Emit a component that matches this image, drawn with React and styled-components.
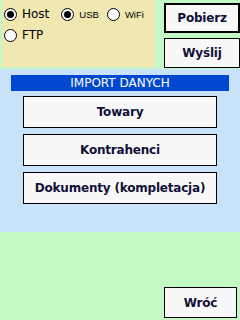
import styled, { createGlobalStyle } from "styled-components";

const Global = createGlobalStyle`
  html, body { margin: 0; padding: 0; }
  body { background: #c4f8c4; font-family: "DejaVu Sans", Verdana, sans-serif; }
`;

const Screen = styled.div`
  width: 240px;
  height: 320px;
  display: flex;
  flex-direction: column;
  background: #c4f8c4;
  overflow: hidden;
`;

const Top = styled.div`
  height: 69px;
  display: flex;
  flex-direction: row;
  justify-content: space-between;
`;

const Options = styled.div`
  width: 153px;
  height: 67px;
  margin-left: 2px;
  background: #f0e8b0;
  box-sizing: border-box;
  padding: 8px 0 0 2px;
  display: flex;
  flex-direction: column;
  gap: 8px;
`;

const RadioRow = styled.div`
  display: flex;
  align-items: center;
  gap: 4px;
`;

const Radio = styled.label`
  display: flex;
  align-items: center;
  gap: 5px;
  font-size: ${p => (p.$small ? "9.5px" : "12px")};
  color: #000;
  font-family: ${p => (p.$small ? '"Liberation Sans", Arial, sans-serif' : '"DejaVu Sans", Verdana, sans-serif')};
  line-height: 13px;
  margin-right: ${p => p.$gap || 0}px;
`;

const Circle = styled.span`
  width: 13px;
  height: 13px;
  box-sizing: border-box;
  border-radius: 50%;
  border: 1px solid #000;
  background: #fff;
  display: flex;
  align-items: center;
  justify-content: center;
  &::after {
    content: "";
    width: 7px;
    height: 7px;
    border-radius: 50%;
    background: #000;
    display: ${p => (p.$on ? "block" : "none")};
  }
`;

const SideButtons = styled.div`
  width: 76px;
  display: flex;
  flex-direction: column;
  padding-top: 3px;
  gap: 5px;
`;

const Button = styled.div`
  box-sizing: border-box;
  height: ${p => p.$h || 30}px;
  width: ${p => (p.$w ? p.$w + "px" : "100%")};
  background: #f8f8f8;
  border: ${p => (p.$default ? "2px" : "1px")} solid #000;
  display: flex;
  align-items: center;
  justify-content: center;
  font-family: "DejaVu Sans", Verdana, sans-serif;
  font-weight: bold;
  font-size: 12px;
  color: #101038;
  letter-spacing: -0.2px;
`;

const Panel = styled.div`
  height: 163px;
  background: #c8e2fa;
  box-sizing: border-box;
  padding: 6px 11px 0 11px;
  display: flex;
  flex-direction: column;
  align-items: center;
`;

const TitleBar = styled.div`
  width: 218px;
  height: 16px;
  background: #0048d0;
  color: #fff;
  font-family: "DejaVu Sans", Verdana, sans-serif;
  font-size: 12px;
  display: flex;
  align-items: center;
  justify-content: center;
  margin-bottom: 5px;
`;

const MenuList = styled.div`
  display: flex;
  flex-direction: column;
  gap: 6px;
`;

const Bottom = styled.div`
  flex: 1;
  display: flex;
  justify-content: flex-end;
  align-items: flex-end;
  padding: 0 3px 2px 0;
`;

export default function App() {
  return (
    <Screen>
      <Global />
      <Top>
        <Options>
          <RadioRow>
            <Radio $gap={8}><Circle $on />Host</Radio>
            <Radio $small $gap={4}><Circle $on />USB</Radio>
            <Radio $small><Circle />WiFi</Radio>
          </RadioRow>
          <RadioRow>
            <Radio><Circle />FTP</Radio>
          </RadioRow>
        </Options>
        <SideButtons>
          <Button $default $h={30}>Pobierz</Button>
          <Button $h={30}>Wyślij</Button>
        </SideButtons>
      </Top>
      <Panel>
        <TitleBar>IMPORT DANYCH</TitleBar>
        <MenuList>
          <Button $w={194} $h={32}>Towary</Button>
          <Button $w={194} $h={32}>Kontrahenci</Button>
          <Button $w={194} $h={32}>Dokumenty (kompletacja)</Button>
        </MenuList>
      </Panel>
      <Bottom>
        <Button $w={73} $h={31}>Wróć</Button>
      </Bottom>
    </Screen>
  );
}
